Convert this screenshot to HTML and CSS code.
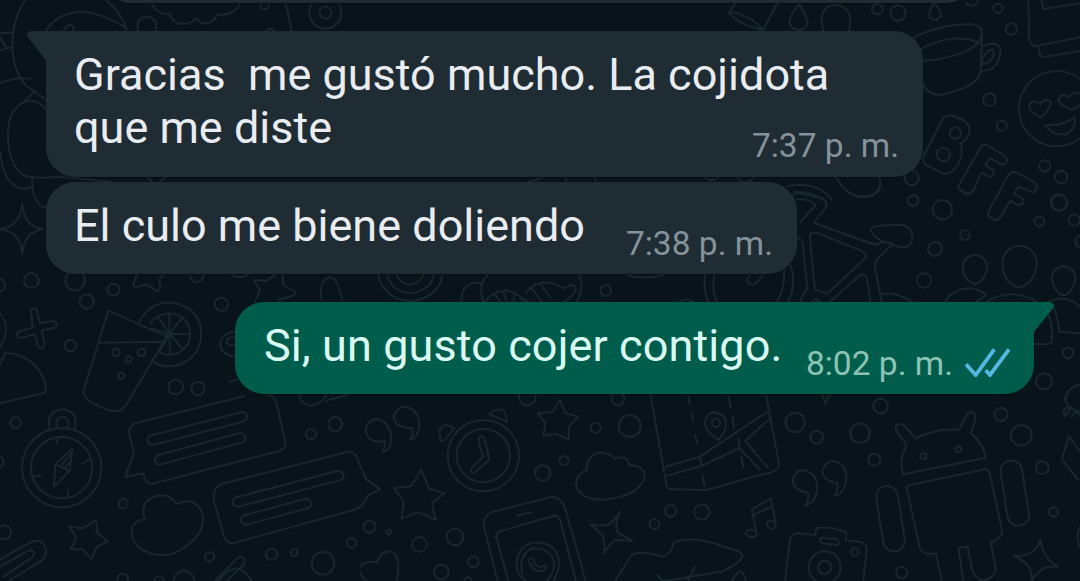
FILE: index.html
```html
<!DOCTYPE html>
<html lang="es">
<head>
  <meta charset="UTF-8">
  <title>Chat</title>
  <link rel="stylesheet" href="styles.css">
</head>
<body>
  <svg class="wallpaper" viewBox="0 0 1080 581" aria-hidden="true">
    <!-- top left: face, cloud, petals -->
    <g transform="scale(.33333)">
      <path d="M75 0Q35 60 37 150Q45 245 105 275L140 300M140 90Q170 40 240 35Q310 38 375 82M318 0Q370 45 380 92M190 92Q205 68 218 78Q224 86 218 94M0 100L40 97M0 112L18 145M0 152L38 140M0 250Q45 230 90 236M75 300L105 274M135 325Q110 295 75 305Q25 325 24 400Q22 490 70 525Q95 538 180 530L330 545M0 455Q10 550 60 565Q80 567 97 560M97 535Q95 585 110 600Q120 625 140 622"/>
      <circle cx="441" cy="79" r="29"/>
      <path d="M455 10Q470 45 508 42Q520 72 550 72Q575 70 587 55Q600 72 620 70Q645 65 650 45Q710 45 718 10M857 10L875 92"/>
      <circle cx="794" cy="14" r="13"/><circle cx="976" cy="38" r="48"/><circle cx="976" cy="38" r="18"/>
      <path d="M800 92Q812 80 822 92M440 530L455 545M480 545L500 530"/>
    </g>
    <!-- top right: cup, smiley, BFF -->
    <g transform="translate(720 0) scale(.33333)">
      <path d="M45 10L27 40Q60 75 130 90L172 10M30 35Q90 45 130 88M237 12Q205 55 208 68Q215 90 236 90Q260 88 263 68Q260 50 237 12ZM310 92Q290 20 345 14Q405 20 387 92M643 8Q625 35 628 48Q635 62 648 60Q665 52 662 40Q655 20 643 8M738 8Q745 18 757 17Q770 15 772 5"/>
      <circle cx="472" cy="27" r="16"/><circle cx="534" cy="39" r="23"/><circle cx="834" cy="25" r="14"/><circle cx="874" cy="87" r="17"/>
      <path d="M580 112Q670 70 755 73Q785 78 786 100Q780 135 735 155Q670 180 608 183M590 155Q640 120 710 115Q760 118 778 130M786 100L782 215Q775 245 735 262Q685 282 655 285Q620 280 608 250M785 140Q830 120 842 145Q840 215 782 213M805 152Q820 145 822 160Q815 192 788 192Q778 175 805 152Z"/>
      <path d="M925 0L927 110Q928 140 950 138L1080 112M955 140L960 165Q965 173 980 170L1080 152M965 0L970 27L1080 10"/>
      <circle cx="808" cy="299" r="19"/><circle cx="845" cy="377" r="15"/><circle cx="974" cy="498" r="17"/><circle cx="1023" cy="531" r="19"/><circle cx="575" cy="534" r="21"/><circle cx="1018" cy="608" r="23"/><circle cx="579" cy="601" r="15"/>
      <circle cx="1010" cy="326" r="113"/>
      <path d="M963 352Q925 335 927 315Q940 295 961 312Q975 292 992 305Q995 325 963 352ZM1055 330Q1015 315 1015 295Q1028 278 1048 292Q1060 272 1080 280M1080 315L1055 330M975 375Q1030 378 1064 352Q1070 385 1040 402Q1000 410 975 375Z"/>
      <path d="M670 355Q680 343 700 348L730 360Q755 380 747 402Q740 422 722 430Q732 455 715 492Q695 525 670 520L618 495Q605 485 612 465Z"/><circle cx="706" cy="399" r="17"/><circle cx="670" cy="463" r="20"/>
      <path d="M783 440Q790 430 803 436L855 468Q868 485 850 495L810 475L796 497L820 510Q828 528 808 530L785 518L758 575Q745 587 732 580L718 568Q712 560 720 550ZM867 522Q875 513 890 518L945 548Q958 565 940 578L895 560L882 582L908 595Q918 612 895 615L870 603L842 650Q832 665 818 658L806 648Q800 640 808 630Z"/>
      <path d="M345 530L380 575Q435 605 470 575Q490 555 475 530M200 560Q235 548 280 560Q320 575 335 600M225 575Q275 575 310 600M52 532Q60 548 75 547Q92 545 100 532"/>
    </g>
    <!-- middle left: sparkle, drink with a slice -->
    <g transform="translate(0 190) scale(.33333)">
      <path d="M67 40Q70 110 130 117Q72 125 67 192Q62 125 0 117Q60 110 67 40Z"/>
      <circle cx="94" cy="272" r="22"/><circle cx="-5" cy="286" r="20"/><circle cx="225" cy="272" r="29"/><circle cx="260" cy="335" r="21"/><circle cx="340" cy="299" r="18"/><circle cx="211" cy="467" r="17"/><circle cx="664" cy="343" r="20"/>
      <path d="M93 365Q98 350 110 358L120 400L160 393Q175 398 168 412L125 422L134 465Q128 480 115 472L105 432L62 445Q48 440 52 427L98 412ZM0 370Q18 390 18 420Q15 450 0 470M0 525L15 490Q60 485 105 525Q135 560 138 598L135 608L0 640"/>
      <path d="M325 362L250 605Q255 630 290 645Q330 668 360 662L380 642L500 440L325 362M298 458L488 455M415 400Q435 355 480 340Q530 330 575 362Q610 400 602 450Q592 500 545 522Q495 540 460 515M450 400Q475 370 510 370Q565 375 571 432Q565 488 510 495Q490 495 478 485M508 432L455 415M508 432L475 380M508 432L508 372M508 432L548 382M508 432L570 432M508 432L550 480M508 432L510 495M508 432L480 482"/>
      <circle cx="508" cy="432" r="7"/><circle cx="348" cy="487" r="11"/><circle cx="386" cy="508" r="9"/><circle cx="424" cy="487" r="11"/><circle cx="364" cy="557" r="9"/><circle cx="527" cy="591" r="22"/><circle cx="594" cy="596" r="20"/>
      <path d="M410 255L400 285Q402 295 415 290L440 283L470 303Q480 305 480 292L478 268L490 255M765 335L780 300L762 270L800 272L830 250M848 255L850 285L885 305Q890 315 875 318L835 330M965 330Q955 275 985 262Q1010 265 1015 290L1027 330M705 425Q660 430 661 465Q665 495 705 500M705 442Q680 440 680 456Q685 468 705 465M690 575L712 568M568 255Q575 277 590 277Q608 275 612 255M695 255Q715 268 740 255"/>
    </g>
    <!-- between the bubbles -->
    <g transform="translate(360 160) scale(.33333)">
      <path d="M55 345Q70 415 150 424Q235 415 247 345M82 345Q95 395 150 400Q215 390 220 345M110 345Q120 372 150 374Q180 370 190 345M305 425Q300 385 335 370Q350 365 365 372Q360 400 370 425M365 370L382 345M375 425Q400 390 440 392Q480 400 490 425M402 400L420 425M430 394L440 425M465 400L460 425M480 410L505 425M500 395Q530 360 580 370L612 385Q640 365 648 385Q640 410 612 425M515 385L545 425M540 370L570 412M658 345Q675 380 650 425M800 345Q850 360 910 345M1035 345Q1030 390 1045 425M1062 345Q1055 390 1070 425M960 425Q980 410 1000 425M505 66L545 54M615 53L620 64M705 53L708 64M1035 53Q1055 68 1075 53"/>
      <circle cx="737" cy="392" r="16"/>
    </g>
    <!-- middle right: bicycle, people -->
    <g transform="translate(720 190) scale(.33333)">
      <path d="M215 15Q235 5 260 15L310 25Q325 45 315 55L282 98L440 155L475 165M230 28Q270 25 287 45L240 98M285 100L465 165L490 155Q450 135 452 115Q465 103 550 105Q580 115 577 150Q570 175 545 172L515 165L470 210Q462 225 468 250L485 335M490 155L520 162M272 130Q280 125 300 132L430 185Q445 198 432 208L325 308Q310 310 285 298Q275 215 270 145ZM232 145Q245 145 248 160L262 295Q245 315 243 335M330 335L420 255Q435 248 440 265L452 335M275 335Q285 322 300 335M212 225Q230 280 205 335M190 225Q200 290 170 335M130 255L105 283Q85 287 80 270L90 255M485 312Q530 305 575 335"/>
      <path d="M380 0Q400 22 432 22Q465 18 478 0M725 0L745 12L760 0"/>
      <circle cx="580" cy="32" r="16"/><circle cx="667" cy="59" r="29"/><circle cx="735" cy="135" r="15"/><circle cx="645" cy="177" r="21"/><circle cx="612" cy="271" r="22"/><circle cx="1017" cy="38" r="25"/><circle cx="958" cy="94" r="15"/><circle cx="1063" cy="90" r="17"/><circle cx="1087" cy="155" r="20"/><circle cx="1044" cy="489" r="16"/><circle cx="972" cy="574" r="24"/>
      <path d="M765 195Q800 200 802 235Q790 282 762 282Q730 270 728 232Q732 198 765 195ZM898 167Q950 172 951 225Q940 285 895 293Q850 280 847 220Q852 170 898 167ZM1032 228Q1065 235 1067 265Q1055 315 1030 316Q1000 305 995 262Q1002 230 1032 228ZM675 335Q700 295 750 295Q780 298 798 315L770 335M800 335Q840 310 880 313Q920 315 950 335M985 335Q1040 310 1080 350M985 375Q1000 410 995 455Q990 465 975 463L942 462M1000 350Q1015 385 1018 425L1080 430M1080 582Q1040 595 1037 630"/>
    </g>
    <!-- bottom left: compass, chat boxes, clip -->
    <g transform="translate(0 380) scale(.33333)">
      <circle cx="185" cy="263" r="119"/><circle cx="185" cy="263" r="92"/><circle cx="187" cy="129" r="18"/>
      <path d="M150 152Q135 95 187 88Q240 95 224 152M168 172L172 192M270 238L246 252M98 290L123 286M202 330L206 354M216 207L166 253L162 320L210 270ZM166 253L208 272M185 255L210 225M195 262L212 245"/>
      <circle cx="47" cy="128" r="16"/><circle cx="-6" cy="246" r="17"/><circle cx="12" cy="457" r="21"/><circle cx="370" cy="371" r="14"/><circle cx="629" cy="530" r="14"/><circle cx="815" cy="523" r="17"/><circle cx="882" cy="518" r="10"/><circle cx="969" cy="550" r="34"/><circle cx="1055" cy="489" r="14"/><circle cx="933" cy="163" r="15"/><circle cx="1005" cy="133" r="21"/><circle cx="368" cy="597" r="16"/><circle cx="552" cy="605" r="32"/><circle cx="477" cy="602" r="14"/>
      <path d="M800 45Q820 45 827 60L857 190Q855 208 840 212L455 312Q435 310 430 280L376 290L402 220L387 160Q385 140 405 130L735 48"/>
      <rect x="438" y="131" width="308" height="29" rx="14" transform="rotate(-14.500 592 146)"/>
      <rect x="460" y="192" width="280" height="29" rx="14" transform="rotate(-15 600 206)"/>
      <path d="M665 312L1045 215Q1068 213 1077 250L1100 300Q1120 310 1139 328Q1125 338 1105 345Q1090 380 1070 387L700 490Q680 490 673 470L642 365Q635 325 665 312Z"/>
      <rect x="693" y="312" width="342" height="29" rx="14" transform="rotate(-14.500 864 326)"/>
      <rect x="720" y="381" width="216" height="29" rx="14" transform="rotate(-15 828 396)"/>
      <path d="M435 418Q415 365 470 348Q510 340 530 372Q590 345 608 405Q615 450 575 485Q530 525 490 526Q425 525 400 480Q380 425 435 418Z"/>
      <path d="M285 423Q292 425 290 457L323 485L290 500L275 538L248 508L212 508L228 475L210 440L248 445Z"/>
      <path d="M0 538L90 488Q125 470 138 505Q142 530 120 545L30 600M0 560L80 515Q100 505 103 520Q100 530 95 533L10 590M645 603L712 535Q725 525 735 538L730 555L680 603M655 603Q680 570 710 565Q740 575 755 603M897 45Q905 75 935 77Q970 70 978 45M978 62L1040 45"/>
    </g>
    <!-- bottom middle: clock, phone, cloud, map -->
    <g transform="translate(360 380) scale(.33333)">
      <circle cx="370" cy="227" r="107"/><circle cx="370" cy="227" r="80"/>
      <path d="M358 172Q365 165 374 175L388 240L343 278Q328 278 335 263L369 230L356 185ZM388 102Q400 85 430 90Q442 105 440 125ZM243 183Q230 150 250 137Q265 132 282 144L257 178Q250 185 243 183ZM63 185Q20 185 17 150Q22 118 52 118Q95 128 94 185Q88 215 68 215Q75 205 74 181ZM150 145Q105 142 101 110Q110 80 138 80Q178 90 178 140Q170 180 150 178Q160 165 158 145Z"/>
      <path d="M600 60L617 100L654 110L627 140L626 178L588 162L550 168L556 130L534 100L578 96ZM183 270L207 325L254 340L215 370L228 420L174 396L125 416L131 365L102 325L155 318Z"/>
      <circle cx="502" cy="51" r="25"/><circle cx="774" cy="57" r="19"/><circle cx="707" cy="143" r="15"/><circle cx="809" cy="138" r="33"/><circle cx="548" cy="279" r="23"/><circle cx="612" cy="242" r="14"/><circle cx="29" cy="440" r="18"/><circle cx="86" cy="457" r="7"/><circle cx="178" cy="493" r="22"/><circle cx="285" cy="471" r="25"/><circle cx="340" cy="545" r="16"/><circle cx="244" cy="576" r="22"/><circle cx="324" cy="603" r="11"/><circle cx="932" cy="393" r="17"/><circle cx="883" cy="433" r="15"/><circle cx="1025" cy="396" r="23"/>
      <path d="M680 270Q680 225 720 217Q750 218 765 237Q795 220 810 255Q860 260 853 295Q835 350 725 360Q655 355 648 315Q650 280 680 270Z"/>
      <path d="M413 603L373 445Q365 410 395 397L575 350Q605 352 615 385L677 603M445 603L410 475Q405 460 420 454L580 408Q595 405 600 420L648 603M470 407L515 396M498 603Q465 580 470 545Q480 490 530 487Q590 490 598 545Q595 580 580 603M487 580Q475 530 510 507Q560 495 582 540Q585 580 560 603M505 540Q510 530 522 538L520 550L540 562L555 557Q565 570 545 574Q515 575 505 540Z"/>
      <path d="M0 560Q15 540 50 547Q65 510 95 514Q125 530 110 603M0 575Q12 600 20 603M780 395Q765 430 770 455L815 482L765 480Q745 495 733 520Q735 490 728 467L692 434Q730 440 748 432Q765 420 780 395ZM765 603L815 525Q840 510 910 530Q935 520 940 490Q975 465 1080 495M890 585L910 603M985 600L1005 560M915 603L1080 575"/>
      <path d="M872 45L920 320Q925 330 940 328L1040 330L1200 285Q1262 275 1257 250L1218 45M917 260L1020 230L1230 90M920 287L1025 258L1135 205M1020 230L1025 258M1135 175L1140 205L1200 270M1155 183L1230 115M1155 183L1225 265M985 50L990 75M995 98L1000 125M1005 165L1012 192M1027 283L1033 315M1105 50L1112 82M1117 110L1122 145M1145 230L1150 263"/>
      <path d="M1075 180Q1030 150 1036 120Q1045 95 1065 97Q1100 105 1098 135Q1092 165 1075 180Z"/><circle cx="1068" cy="129" r="12"/>
    </g>
    <!-- bottom right: robot, camera, notes -->
    <g transform="translate(720 380) scale(.33333)">
      <circle cx="225" cy="127" r="29"/><circle cx="290" cy="172" r="19"/><circle cx="482" cy="78" r="22"/><circle cx="420" cy="159" r="29"/><circle cx="463" cy="239" r="18"/><circle cx="843" cy="103" r="20"/><circle cx="904" cy="166" r="31"/><circle cx="967" cy="263" r="19"/><circle cx="1000" cy="396" r="14"/><circle cx="545" cy="578" r="17"/><circle cx="610" cy="229" r="9"/><circle cx="715" cy="208" r="9"/>
      <path d="M550 283Q535 240 560 195L528 150Q525 130 545 132Q555 135 587 175Q645 145 717 149L742 102Q760 88 767 105Q768 120 752 160Q790 190 797 230Q795 235 785 236ZM560 325Q555 318 570 315L795 268Q805 268 809 280L847 455Q840 480 812 487L827 565Q822 600 785 600Q765 595 757 570L742 500L715 503L730 603M560 325L600 505Q607 520 625 522L648 520L665 603"/>
      <rect x="479" y="317" width="65" height="198" rx="32" transform="rotate(-9 512 416)"/>
      <rect x="852" y="241" width="65" height="197" rx="32" transform="rotate(-9 884 340)"/>
      <path d="M258 337Q220 330 218 300Q225 270 252 271Q293 280 292 330Q285 370 257 375Q267 360 265 338ZM347 308Q310 302 306 275Q315 243 342 243Q380 250 379 300Q370 345 345 346Q355 330 353 310Z"/>
      <path d="M110 460L95 388L153 355L167 430M100 405L155 380"/><ellipse cx="94" cy="460" rx="17" ry="11"/><ellipse cx="154" cy="434" rx="13" ry="12"/>
      <path d="M195 603L210 480Q215 460 235 460L285 465L290 443Q340 440 378 458L378 480L425 487Q442 493 440 510L430 603M303 473L350 477Q362 485 352 495L305 490Q295 480 303 473Z"/>
      <circle cx="314" cy="562" r="48"/><circle cx="314" cy="562" r="20"/><circle cx="404" cy="516" r="12"/>
      <path d="M0 498Q65 510 68 530Q60 550 0 577M35 603L55 575Q70 570 78 603M308 45L315 72L328 45M962 478Q965 530 1012 560Q960 555 935 603Q940 550 882 528Q945 530 962 478ZM1080 13Q1040 25 1035 55Q1040 85 1080 95M1030 92L1042 82L1050 90L1035 108ZM1055 110L1065 95L1080 105M1080 215L1047 168L1025 238L1075 300M1080 440Q1065 470 1080 500"/>
    </g>
  </svg>

  <main class="chat">
    <div class="bubble previous"></div>

    <div class="bubble received first">
      <svg class="tail tail-left" viewBox="0 0 20 32"><path d="M20 0H4Q-2 1 .800 6L20 31Z"/></svg>
      <p class="text">Gracias&nbsp; me gustó mucho. La cojidota<br>que me diste</p>
      <span class="meta">7:37 p. m.</span>
    </div>

    <div class="bubble received second">
      <p class="text">El culo me biene doliendo</p>
      <span class="meta">7:38 p. m.</span>
    </div>

    <div class="bubble sent">
      <svg class="tail tail-right" viewBox="0 0 20 32"><path d="M0 0H16Q22 1 19.200 6L0 30Z"/></svg>
      <p class="text">Si, un gusto cojer contigo.</p>
      <span class="meta">8:02 p. m.</span>
      <svg class="ticks" viewBox="0 0 46 30"><path d="M1 17.300L10.700 28L29.300 2.300M20.700 23.300L25 28L44 2.300"/></svg>
    </div>
  </main>
</body>
</html>
```
FILE: styles.css
```css
body {
  margin: 0;
  height: 581px;
  overflow: hidden;
  background: #08131a;
  font-family: Roboto, sans-serif;
}
.wallpaper {
  position: absolute;
  top: 0;
  left: 0;
  width: 1080px;
  height: 581px;
  fill: none;
  stroke: #19262c;
  stroke-width: 6;
  stroke-linecap: round;
  stroke-linejoin: round;
}
.chat {
  position: relative;
  display: flex;
  flex-direction: column;
  align-items: flex-start;
  padding: 0 46px;
}
.bubble {
  position: relative;
  display: flex;
  box-sizing: border-box;
  border-radius: 29px;
  padding: 17px 24px 0 28px;
  background: #202c33;
  color: #e9edf2;
  box-shadow: 0 1px 1px rgba(0,0,0,0.3);
}
.previous {
  width: 874px;
  height: 60px;
  margin: -57px 0 28px 56px;
}
.first {
  flex-direction: column;
  width: 877px;
  height: 146px;
  border-top-left-radius: 0;
}
.second {
  width: 751px;
  height: 92px;
  margin-top: 5px;
}
.sent {
  align-self: flex-end;
  width: 799px;
  height: 92px;
  margin-top: 28px;
  padding-left: 29px;
  padding-right: 23px;
  border-top-right-radius: 0;
  background: #005d4b;
  color: #d9fbf3;
}
.text {
  margin: 0;
  font-size: 45px;
  line-height: 53px;
  white-space: nowrap;
}
.sent .text {
  letter-spacing: 0.1px;
}
.meta {
  margin-left: auto;
  padding-top: 25px;
  font-size: 33.5px;
  line-height: 40px;
  color: #84929b;
  white-space: nowrap;
}
.first .meta {
  margin-top: -53px;
}
.sent .meta {
  color: #8dc3b6;
}
.tail {
  position: absolute;
  top: 0;
  width: 20px;
  height: 32px;
}
.tail-left {
  left: -19px;
  fill: #202c33;
}
.tail-right {
  right: -20px;
  fill: #005d4b;
}
.ticks {
  width: 46px;
  height: 30px;
  margin: 28px 0 0 12px;
  fill: none;
  stroke: #53b9e3;
  stroke-width: 3.8;
}
```
